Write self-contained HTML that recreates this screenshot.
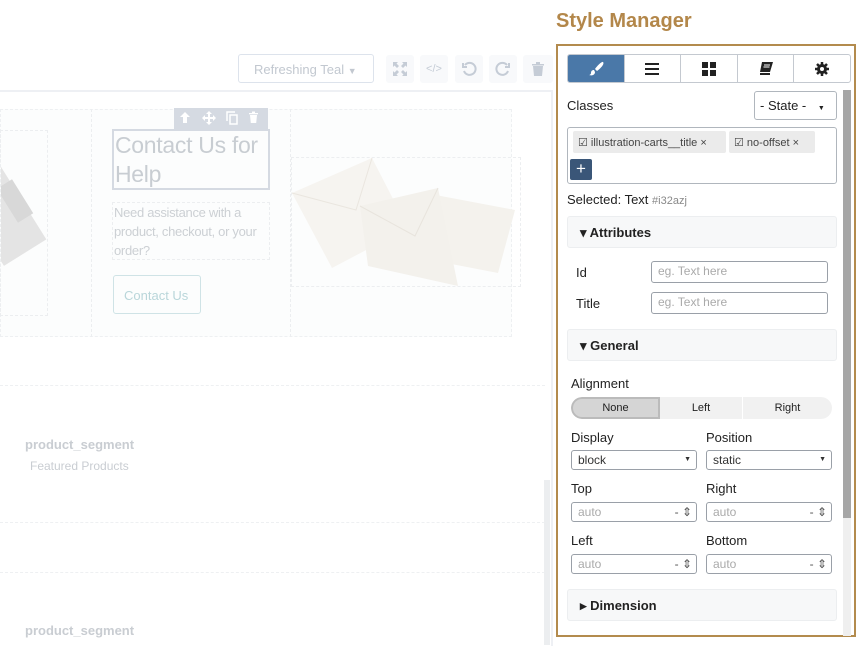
<!DOCTYPE html>
<html><head><meta charset="utf-8"><style>
*{box-sizing:border-box;margin:0;padding:0}
body{width:859px;height:656px;position:relative;background:#fff;font-family:"Liberation Sans",sans-serif;overflow:hidden;color:#222}
.a{position:absolute}
.t{font-size:13px}
.inp{position:absolute;border:1px solid #9aa0a8;border-radius:3px;height:20px;font-size:12px;padding:2px 6px;color:#333;background:#fff}
.ph{color:#aaa}
.sec{position:absolute;left:567px;width:270px;height:32px;background:#f7f8f9;border:1px solid #eceef0;border-radius:3px;font-size:13px;font-weight:bold;padding:8px 0 0 12px}
.faint{color:#c9cdd2}
.tb{position:absolute;top:55px;width:28px;height:28px;background:#f8f9fb;border-radius:3px;display:flex;align-items:center;justify-content:center}
.tab{flex:1;display:flex;align-items:center;justify-content:center;border-left:1px solid #c4c9d0}
</style></head><body>
<div class="a" style="left:238px;top:54px;width:136px;height:29px;border:1px solid #dde3ec;border-radius:3px;font-size:13px;color:#c2c8d0;padding:7px 0 0 15px">Refreshing Teal <span style="font-size:9px">&#9660;</span></div>
<div class="tb" style="left:386px"><svg width="14" height="14" viewBox="0 0 14 14" fill="#c5ccd6"><path d="M0 0h5L3.5 1.5 6 4 4 6 1.5 3.5 0 5zM14 0v5l-1.5-1.5L10 6 8 4l2.5-2.5L9 0zM0 14V9l1.5 1.5L4 8l2 2-2.5 2.5L5 14zM14 14H9l1.5-1.5L8 10l2-2 2.5 2.5L14 9z"/></svg></div>
<div class="tb" style="left:420px;color:#c5ccd6;font-size:11px">&lt;/&gt;</div>
<div class="tb" style="left:455px"><svg width="16" height="16" viewBox="0 0 16 16" fill="none" stroke="#c5ccd6" stroke-width="2"><path d="M4 4a6 6 0 1 1-1 6"/><path d="M2 2v4h4" /></svg></div>
<div class="tb" style="left:489px"><svg width="16" height="16" viewBox="0 0 16 16" fill="none" stroke="#c5ccd6" stroke-width="2"><path d="M12 4a6 6 0 1 0 1 6"/><path d="M14 2v4h-4"/></svg></div>
<div class="tb" style="left:523px;width:30px"><svg width="12" height="14" viewBox="0 0 12 14" fill="#c5ccd6"><path d="M0 2h12v1.5H0zM4 0h4v2H4zM1 4h10l-1 10H2z"/></svg></div>
<div class="a" style="left:0;top:90px;width:553px;height:556px;border-top:2px solid #eef0f4;border-right:2px solid #eef0f4"></div>
<div class="a" style="left:0;top:109px;width:512px;height:228px;background:#fcfdfd;border:1px dashed #eef0f2"></div>
<div class="a" style="left:0;top:130px;width:48px;height:186px;border:1px dashed #eceef0;overflow:hidden">
<div class="a" style="left:-30px;top:20px;width:50px;height:110px;background:#e4e4e4;transform:rotate(-32deg)"></div>
<div class="a" style="left:5px;top:50px;width:18px;height:40px;background:#d8d8d8;transform:rotate(-32deg)"></div></div>
<div class="a" style="left:91px;top:109px;width:200px;height:228px;border-left:1px dashed #eceef0;border-right:1px dashed #eceef0"></div>
<div class="a" style="left:174px;top:108px;width:94px;height:21px;background:#d5dae2"></div>
<svg class="a" style="left:174px;top:108px" width="94" height="21" fill="#fff"><path d="M11 4l5 5h-3v6h-4V9H6z"/><path d="M35 3l3 3h-2v3h3V7l3 3-3 3v-2h-3v3h2l-3 3-3-3h2v-3h-3v2l-3-3 3-3v2h3V6h-2z"/><path d="M53 13V4h8" fill="none" stroke="#fff" stroke-width="1.5"/><rect x="56" y="7" width="7" height="9" fill="none" stroke="#fff" stroke-width="1.5"/><path d="M75 5h9v1.3h-9zM78 3.5h3V5h-3zM76 7h7l-.8 8h-5.4z"/></svg>
<div class="a" style="left:112px;top:129px;width:158px;height:61px;border:2px solid #d5dae2;font-size:23px;color:#c8cdd2;line-height:29px;padding-left:1px;letter-spacing:-0.3px">Contact Us for Help</div>
<div class="a" style="left:112px;top:202px;width:158px;height:58px;border:1px dashed #eceef0;font-size:13px;color:#ccd0d4;line-height:19px;padding-left:1px;letter-spacing:-0.3px">Need assistance with a product, checkout, or your order?</div>
<div class="a" style="left:113px;top:275px;width:88px;height:39px;border:1px solid #cfe3e6;border-radius:3px;font-size:13px;color:#b9d6da;padding:12px 0 0 10px">Contact Us</div>
<div class="a" style="left:291px;top:157px;width:230px;height:130px;border:1px dashed #eceef0"></div>
<svg class="a" style="left:290px;top:158px" width="232" height="130"><polygon points="2,35 82,0 118,70 42,110" fill="#f6f4f0"/><polyline points="2,35 66,52 82,0" fill="none" stroke="#eae6df"/><polygon points="135,35 225,52 208,115 120,98" fill="#f4f2ed"/><polygon points="70,48 148,30 168,128 78,108" fill="#f3f1ec"/><polyline points="70,48 125,78 148,30" fill="none" stroke="#e8e4dd"/></svg>
<div class="a" style="left:0;top:385px;width:545px;height:1px;border-top:1px dashed #eef0f2"></div>
<div class="a" style="left:0;top:522px;width:545px;height:1px;border-top:1px dashed #eef0f2"></div>
<div class="a" style="left:0;top:572px;width:545px;height:1px;border-top:1px dashed #eef0f2"></div>
<div class="a faint" style="left:25px;top:437px;font-size:13px;font-weight:bold">product_segment</div>
<div class="a faint" style="left:30px;top:459px;font-size:12px">Featured Products</div>
<div class="a faint" style="left:25px;top:623px;font-size:13px;font-weight:bold">product_segment</div>
<div class="a" style="left:544px;top:480px;width:6px;height:165px;background:#eceef0"></div>
<div class="a" style="left:556px;top:10px;font-size:20px;font-weight:bold;color:#b3874a">Style Manager</div>
<div class="a" style="left:556px;top:44px;width:300px;height:593px;border:2px solid #b38b4e"></div>
<div class="a" style="left:567px;top:54px;width:284px;height:29px;border:1px solid #c4c9d0;border-radius:3px;display:flex;overflow:hidden">
<div class="tab" style="background:#4a78a8;border-left:none"><svg width="16" height="16" viewBox="0 0 16 16" fill="#fff"><path d="M15 1c-1-1-6 4-8 7l2 2c3-2 8-7 6-9zM6 9c-2 0-3 1-3 3 0 1-1 2-2 2 3 1 6 0 6-3z"/></svg></div>
<div class="tab"><svg width="14" height="12" viewBox="0 0 14 12" fill="#222"><path d="M0 0h14v2H0zM0 5h14v2H0zM0 10h14v2H0z"/></svg></div>
<div class="tab"><svg width="14" height="14" viewBox="0 0 14 14" fill="#222"><path d="M0 0h6v6H0zM8 0h6v6H8zM0 8h6v6H0zM8 8h6v6H8z"/></svg></div>
<div class="tab"><svg width="14" height="13" viewBox="0 0 14 13" fill="#222"><path d="M3 0h11l-3 10H1zM1 11h10v2H1z"/><path d="M5 3h6M4.5 5h6" stroke="#fff" stroke-width="1"/></svg></div>
<div class="tab"><svg width="14" height="14" viewBox="0 0 14 14"><circle cx="7" cy="7" r="5" fill="#222"/><path d="M7 0v14M0 7h14M2 2l10 10M12 2L2 12" stroke="#222" stroke-width="2.5"/><circle cx="7" cy="7" r="2" fill="#fff"/></svg></div>
</div>
<div class="a" style="left:843px;top:90px;width:8px;height:546px;background:#efefef"></div>
<div class="a" style="left:843px;top:90px;width:8px;height:428px;background:#a6a6a6"></div>
<div class="a t" style="left:567px;top:98px">Classes</div>
<div class="a" style="left:754px;top:91px;width:83px;height:29px;border:1px solid #b0b6bd;border-radius:3px;font-size:13px;padding:6px 0 0 5px">- State - <span style="font-size:7px;margin-left:8px">&#9660;</span></div>
<div class="a" style="left:567px;top:127px;width:270px;height:57px;border:1px solid #b0b6bd;border-radius:3px"></div>
<div class="a" style="left:573px;top:131px;width:153px;height:22px;background:#ebebeb;border-radius:2px;font-size:11px;color:#444;padding:5px 0 0 5px">&#9745; illustration-carts__title &#215;</div>
<div class="a" style="left:729px;top:131px;width:86px;height:22px;background:#ebebeb;border-radius:2px;font-size:11px;color:#444;padding:5px 0 0 5px">&#9745; no-offset &#215;</div>
<div class="a" style="left:570px;top:159px;width:22px;height:21px;background:#3a5678;border-radius:2px;color:#fff;text-align:center;font-size:17px;line-height:20px">+</div>
<div class="a t" style="left:567px;top:192px">Selected: Text <span style="color:#888;font-size:11px">#i32azj</span></div>
<div class="sec" style="top:216px">&#9662; Attributes</div>
<div class="a t" style="left:576px;top:265px">Id</div>
<div class="inp ph" style="left:651px;top:261px;width:177px;height:22px">eg. Text here</div>
<div class="a t" style="left:576px;top:296px">Title</div>
<div class="inp ph" style="left:651px;top:292px;width:177px;height:22px">eg. Text here</div>
<div class="sec" style="top:329px">&#9662; General</div>
<div class="a t" style="left:571px;top:376px">Alignment</div>
<div class="a" style="left:571px;top:397px;width:261px;height:22px;background:#f1f1f1;border-radius:11px;display:flex;font-size:11px;overflow:hidden">
<div style="width:89px;background:#d5d5d5;border:2px solid #bbb;border-radius:11px 0 0 11px;text-align:center;line-height:18px">None</div>
<div style="width:83px;text-align:center;line-height:22px;border-right:1px solid #fff">Left</div>
<div style="flex:1;text-align:center;line-height:22px">Right</div></div>
<div class="a t" style="left:571px;top:430px">Display</div>
<div class="a t" style="left:706px;top:430px">Position</div>
<div class="inp" style="left:571px;top:450px;width:126px">block<span style="position:absolute;right:5px;font-size:7px;top:5px">&#9660;</span></div>
<div class="inp" style="left:706px;top:450px;width:126px">static<span style="position:absolute;right:5px;font-size:7px;top:5px">&#9660;</span></div>
<div class="a t" style="left:571px;top:481px">Top</div>
<div class="a t" style="left:706px;top:481px">Right</div>
<div class="inp ph" style="left:571px;top:502px;width:126px">auto<span style="position:absolute;right:4px;color:#555">- &#8661;</span></div>
<div class="inp ph" style="left:706px;top:502px;width:126px">auto<span style="position:absolute;right:4px;color:#555">- &#8661;</span></div>
<div class="a t" style="left:571px;top:533px">Left</div>
<div class="a t" style="left:706px;top:533px">Bottom</div>
<div class="inp ph" style="left:571px;top:554px;width:126px">auto<span style="position:absolute;right:4px;color:#555">- &#8661;</span></div>
<div class="inp ph" style="left:706px;top:554px;width:126px">auto<span style="position:absolute;right:4px;color:#555">- &#8661;</span></div>
<div class="sec" style="top:589px">&#9656; Dimension</div>
</body></html>
